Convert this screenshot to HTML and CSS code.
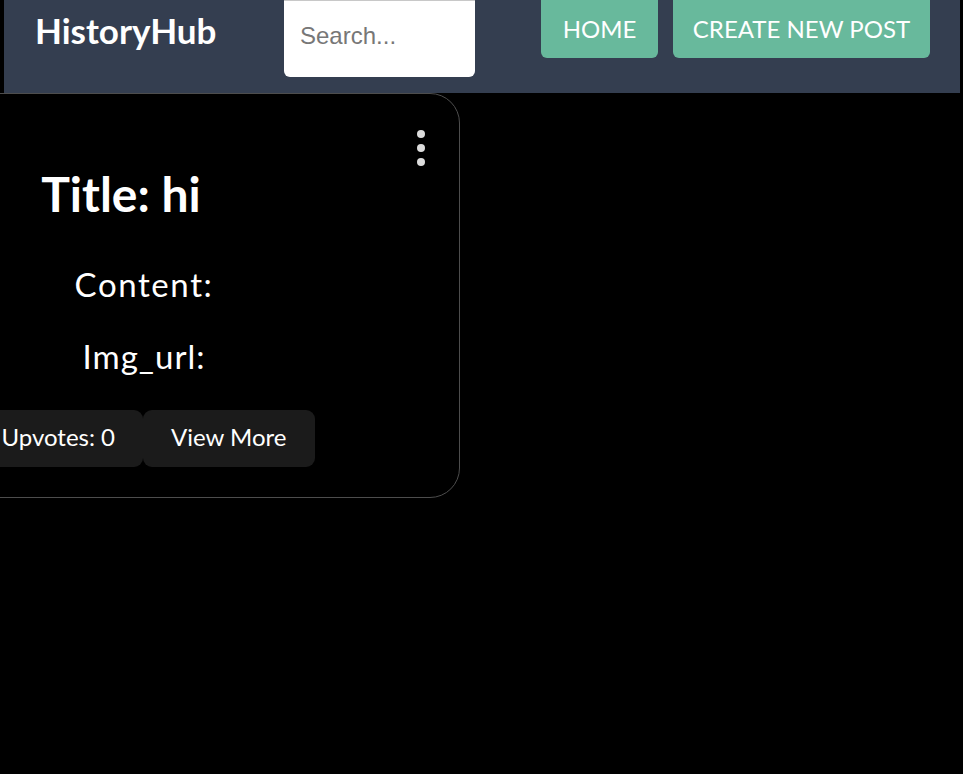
FILE: index.html
```html
<!DOCTYPE html>
<html lang="en">
<head>
<meta charset="utf-8">
<title>HistoryHub</title>
<link rel="stylesheet" href="styles.css">
</head>
<body>
<header class="topbar">
  <div class="logo">HistoryHub</div>
  <input class="search" type="text" placeholder="Search...">
  <nav class="nav">
    <a class="nav-btn home" href="#">HOME</a>
    <a class="nav-btn create" href="#">CREATE NEW POST</a>
  </nav>
</header>
<main class="feed">
  <article class="card">
    <div class="menu" aria-label="menu">
      <span class="dot"></span><span class="dot"></span><span class="dot"></span>
    </div>
    <h1 class="title">Title: hi</h1>
    <p class="field content">Content:</p>
    <p class="field img">Img_url:</p>
    <div class="actions">
      <button class="act">Upvotes: 0</button>
      <button class="act">View More</button>
    </div>
  </article>
</main>
</body>
</html>
```
FILE: styles.css
```css
html, body {
  margin: 0;
  padding: 0;
  background: #000;
  font-family: Lato, "Open Sans", sans-serif;
  color: #fff;
  overflow: hidden;
}

.topbar {
  margin: 0 3px 0 4px;
  height: 93px;
  background: #343e50;
  display: flex;
  align-items: flex-start;
}

.logo {
  margin: 9px 0 0 31px;
  font-weight: 700;
  font-size: 35px;
  line-height: 42px;
  width: 249px;
}

.search {
  box-sizing: border-box;
  width: 191px;
  height: 77px;
  border: none;
  border-top: 1px solid #c8c8c8;
  border-radius: 0 0 6px 6px;
  padding: 0 0 7px 16px;
  font-family: "Liberation Sans", Arial, sans-serif;
  font-size: 24px;
  color: #333;
  background: #fff;
  outline: none;
}
.search::placeholder { color: #777; }

.nav {
  margin-left: 66px;
  display: flex;
  gap: 15px;
}

.nav-btn {
  display: flex;
  align-items: center;
  justify-content: center;
  height: 58px;
  box-sizing: border-box;
  padding: 0 0 2px;
  background: #68b99c;
  border-radius: 0 0 6px 6px;
  color: #fff;
  text-decoration: none;
  font-size: 24px;
  line-height: 29px;
}
.nav-btn.home { width: 117px; }
.nav-btn.create { width: 257px; }

.feed {
  display: flex;
}

.card {
  position: relative;
  box-sizing: border-box;
  width: 632px;
  margin-left: -172px;
  height: 405px;
  padding-top: 71px;
  border: 1px solid #4d4d4d;
  border-radius: 30px;
  text-align: center;
}

.menu {
  position: absolute;
  top: 36px;
  right: 34px;
  display: flex;
  flex-direction: column;
  gap: 6px;
}
.dot {
  width: 8px;
  height: 8px;
  border-radius: 50%;
  background: #dcdcdc;
}

.title {
  margin: 0;
  padding-right: 46px;
  font-size: 48px;
  line-height: 58px;
  font-weight: 700;
}

.field {
  margin: 0;
  font-size: 33px;
  line-height: 40px;
  letter-spacing: 1.6px;
}
.content { margin-top: 41px; }
.img { margin-top: 32px; letter-spacing: 1px; }

.actions {
  margin-top: 34px;
  display: flex;
  justify-content: center;
}

.act {
  height: 57px;
  padding: 0 28px 4px;
  border: none;
  border-radius: 9px;
  background: #1b1b1b;
  color: #fff;
  font-family: Lato, "Open Sans", sans-serif;
  font-size: 24px;
  line-height: 53px;
}
```
